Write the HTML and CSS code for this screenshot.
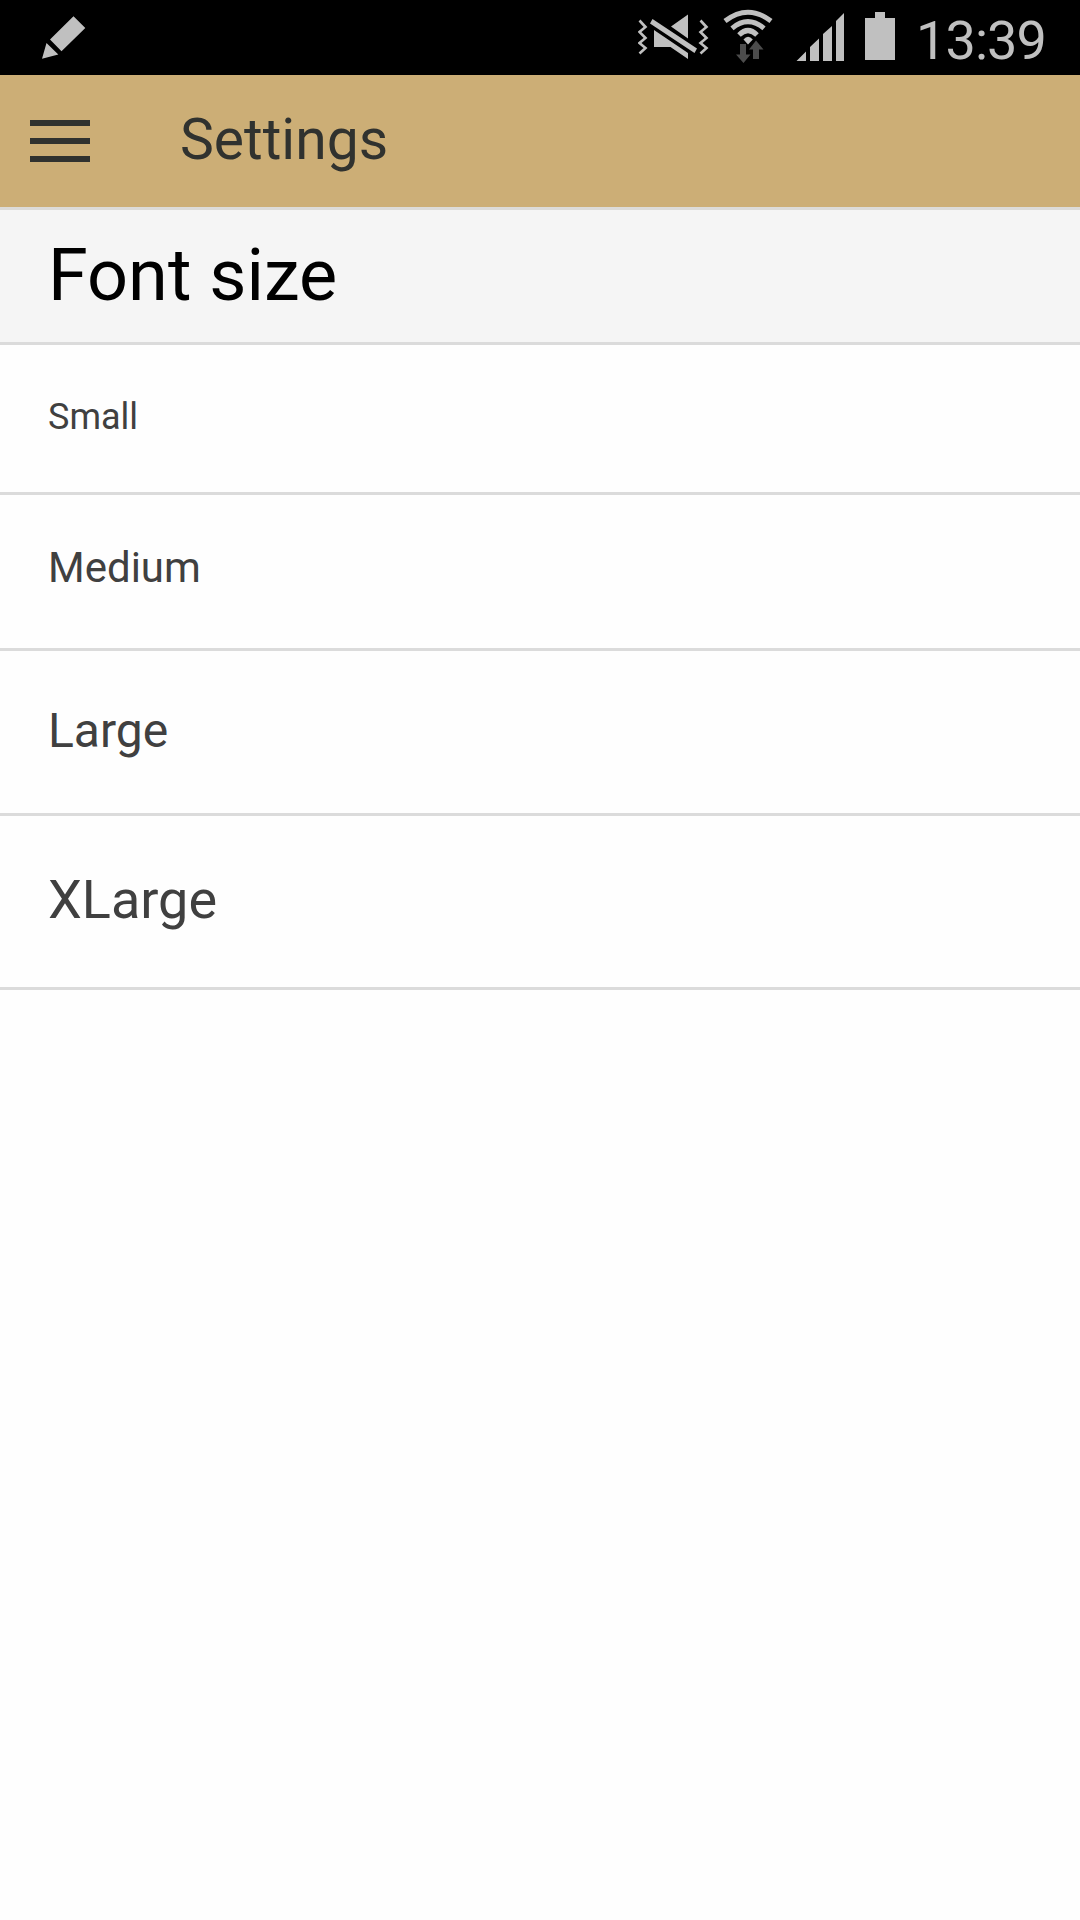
FILE: index.html
```html
<!DOCTYPE html>
<html lang="en">
<head>
<meta charset="utf-8">
<title>Settings</title>
<link rel="stylesheet" href="styles.css">
</head>
<body>
<div class="status">
  <svg class="pencil" width="44" height="75" viewBox="42 0 44 75"><path d="M73.5 16.3L85.3 28L61.5 51.2L50 39.5ZM46.5 43L58.3 54.5L42 58.8Z"/></svg>
  <svg class="system" width="258" height="75" viewBox="638 0 258 75">
    <g class="zigzag"><path d="M639.5 20.5L645.5 27L639.5 32L645.5 38L639.5 43L645.5 48L639.5 53.5"/><path d="M700.5 20.5L706.5 27L700.5 32L706.5 38L700.5 43L706.5 48L700.5 53.5"/></g>
    <path d="M652.5 19L697 48.5L694.5 53L650 23.5ZM688 14.5V38.5L671 26.5ZM654 30L688 53V59L670.5 47H654Z"/>
    <g class="waves"><path d="M725 21Q748 3.500 771 21"/><path d="M732 28.300Q748 15 764 28.300"/><path d="M739 35Q748 26 757 35"/></g>
    <path d="M743.500 39.500Q748 34 752.800 39.500L748 44.500Z"/>
    <path class="arrows" d="M740 44H746V54.500H750.500L743.500 63L736 54.500H740ZM756 40.500L763.500 49.500H759V59H753V49.500H749Z"/>
    <path d="M796.500 61L806 51.500V61ZM810 61V47L819 38.500V61ZM823 61V34L832 26V61ZM836 61V21L844 13V61Z"/>
    <path d="M865 18H875V12H885V18H895V60H865Z"/>
  </svg>
  <span class="clock">13:39</span>
</div>
<header class="bar">
  <svg width="60" height="42" viewBox="0 0 60 42"><path d="M0 0H60V6H0ZM0 18H60V24H0ZM0 36H60V42H0Z"/></svg>
  <span class="title">Settings</span>
</header>
<h1 class="section">Font size</h1>
<div class="row small">Small</div>
<div class="row medium">Medium</div>
<div class="row large">Large</div>
<div class="row xlarge">XLarge</div>
</body>
</html>
```
FILE: styles.css
```css
* { box-sizing: border-box; }
body { margin: 0; background: #fefefe; color: #404040; font-family: Roboto, sans-serif; height: 1920px; overflow: hidden; }
.status { display: flex; align-items: center; height: 75px; background: #000; padding: 0 33px 0 42px; }
.status svg { fill: #c0c0c0; flex: none; }
.system { margin-left: auto; }
.status .zigzag { fill: none; stroke: #c0c0c0; stroke-width: 2.6; }
.status .waves { fill: none; stroke: #c0c0c0; stroke-width: 5; }
.status .arrows { fill: #4c4c4c; }
.clock { width: 131px; margin-left: 20px; padding-top: 6px; font-size: 54px; font-weight: 400; letter-spacing: -0.9px; color: #c0c0c0; white-space: nowrap; }
.bar { display: flex; align-items: center; height: 135px; padding: 0 30px; background: #ccae76; border-bottom: 3px solid #dcdbd8; color: #30322f; }
.bar svg { fill: #30322f; }
.title { margin-left: 90px; padding-bottom: 3px; font-size: 57px; }
.section { margin: 0; display: flex; align-items: center; height: 135px; padding: 0 0 2px 48px; font-size: 72px; font-weight: 400; color: #000; background: #f5f5f5; border-bottom: 3px solid #dbdbdb; }
.row { display: flex; align-items: center; padding-left: 48px; border-bottom: 3px solid #dbdbdb; }
.small { height: 150px; padding-bottom: 3px; font-size: 36px; }
.medium { height: 156px; padding-bottom: 8px; font-size: 42px; }
.large { height: 165px; padding-bottom: 3px; font-size: 48px; }
.xlarge { height: 174px; padding-bottom: 4px; font-size: 54px; }
```
